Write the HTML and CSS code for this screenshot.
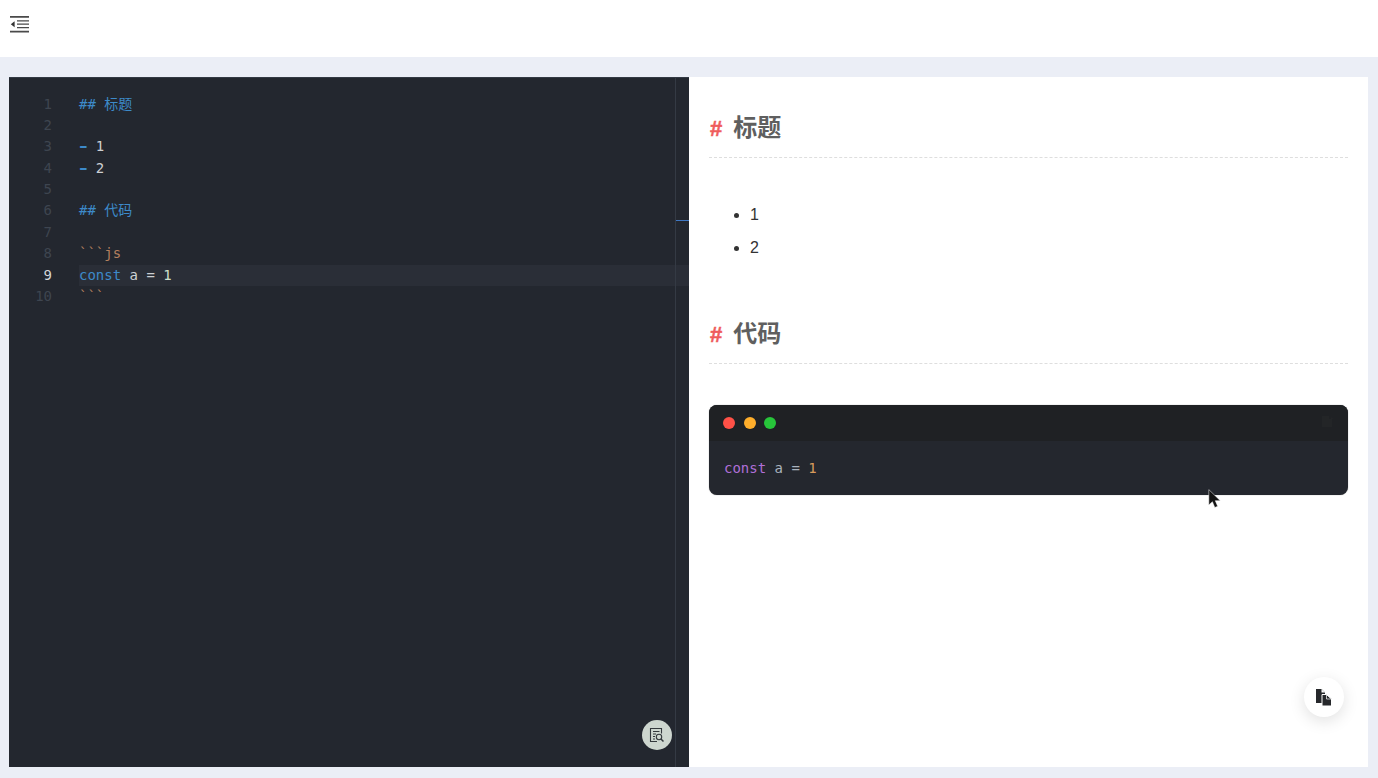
FILE: index.html
```html
<!DOCTYPE html>
<html lang="zh">
<head>
<meta charset="utf-8">
<title>Editor</title>
<link rel="stylesheet" href="styles.css">
</head>
<body>
<header class="topbar">
  <svg class="menu-icon" width="19" height="17" viewBox="0 0 19 17" fill="#4a4a4a"><path d="M0 0h19v1.800H0zM0 14.700h19v1.800H0z"/><path d="M7 4.200h12v1.200H7zM7 7.600h12v1.200H7zM7 11h12v1.200H7z"/><path d="M0.800 8.200L4.600 5.200v6z" fill="#333"/></svg>
</header>
<main class="workspace">
  <section class="editor">
    <div class="gutter">
      <div class="num">1</div><div class="num">2</div><div class="num">3</div><div class="num">4</div><div class="num">5</div><div class="num">6</div><div class="num">7</div><div class="num">8</div><div class="num active">9</div><div class="num">10</div>
    </div>
    <div class="lines">
      <div class="line"><span class="blue">## 标题</span></div>
      <div class="line"></div>
      <div class="line"><span class="blue dash">-</span> 1</div>
      <div class="line"><span class="blue dash">-</span> 2</div>
      <div class="line"></div>
      <div class="line"><span class="blue">## 代码</span></div>
      <div class="line"></div>
      <div class="line"><span class="tan">```js</span></div>
      <div class="line current"><span class="blue">const</span> a = <span class="num-val">1</span></div>
      <div class="line"><span class="tan">```</span></div>
    </div>
    <div class="rail"><span class="rail-mark"></span></div>
    <button class="search-btn" aria-label="search">
      <svg width="16" height="16" viewBox="0 0 16 16" fill="none" stroke="#33383c" stroke-width="1.100"><path d="M8 14.500H1.500v-13h11v5"/><path d="M4 4.500h6.500M4 7h3M4 9.500h2M4 12h2"/><circle cx="10" cy="10" r="2.700"/><path d="M12 12l2.500 2.500" stroke-width="1.500"/></svg>
    </button>
  </section>
  <section class="preview">
    <h2 class="heading"><span class="hash">#</span>标题</h2>
    <ul class="list"><li>1</li><li>2</li></ul>
    <h2 class="heading"><span class="hash">#</span>代码</h2>
    <div class="code-card">
      <div class="code-head">
        <i class="dot red"></i><i class="dot amber"></i><i class="dot green"></i>
        <svg class="head-copy" width="13" height="14" viewBox="0 0 13 14" fill="#232527"><path d="M0 0h7v3h3v8H0z"/><path d="M9 1l3 2h-3z"/></svg>
      </div>
      <pre class="code-body"><span class="kw">const</span> a = <span class="lit">1</span></pre>
    </div>
    <button class="copy-btn" aria-label="copy">
      <svg width="16" height="17" viewBox="0 0 16 17"><path d="M0 0h5.500L9 3.500V14H0z" fill="#26282b"/><path d="M5.500 0v3.500H9" fill="#fff"/><path d="M6 5.500h4.500L15.500 10v7H6z" fill="#26282b" stroke="#fff" stroke-width="1"/><path d="M10.500 6v4h4.500" fill="none" stroke="#fff" stroke-width=".7"/></svg>
    </button>
    <svg class="cursor" width="13" height="20" viewBox="0 0 13 20"><path d="M.8 .6v15.400l3.600-3.300 2.400 5.800 2.900-1.200-2.400-5.600h5z" fill="#141414" stroke="#fff" stroke-width=".5"/></svg>
  </section>
</main>
</body>
</html>
```
FILE: styles.css
```css
* { box-sizing: border-box; }
html, body { height: 100%; }
body {
  margin: 0;
  height: 778px;
  overflow: hidden;
  background: #ebeef6;
  font-family: "Liberation Sans", "Noto Sans CJK SC", sans-serif;
  display: flex;
  flex-direction: column;
}
.topbar {
  height: 57px;
  flex: none;
  background: #fff;
  display: flex;
  align-items: center;
  padding: 0 0 8px 10px;
}
.menu-icon { display: block; }
.workspace {
  margin: 20px 10px 11px 9px;
  flex: 1;
  display: flex;
  min-height: 0;
}
.editor {
  position: relative;
  width: 680px;
  flex: none;
  background: #23272f;
  border-top: 1px solid #333a44;
  display: flex;
  padding-top: 15.500px;
  font-family: "DejaVu Sans Mono", "Noto Sans CJK SC", monospace;
  font-size: 14px;
  line-height: 21.390px;
  color: #cdd0d3;
}
.gutter {
  width: 43px;
  flex: none;
  text-align: right;
  color: #3e4550;
}
.num.active { color: #d4d7da; }
.num { height: 21.390px; }
.lines {
  margin-left: 27px;
  flex: 1;
}
.line { height: 21.390px; white-space: pre; }
.line.current { background: #2a2e37; }
.blue { color: #3d8ac9; }
.dash {
  display: inline-block;
  transform: scaleX(1.500);
  font-weight: 700;
}
.tan { color: #b5805f; }
.num-val { color: #cfe0cb; }
.rail {
  position: absolute;
  top: 0;
  right: 0;
  bottom: 0;
  width: 14px;
  border-left: 1px solid #343a44;
}
.rail-mark {
  position: absolute;
  left: 0;
  right: 0;
  top: 142px;
  height: 1px;
  background: #3f78c4;
}
.search-btn {
  position: absolute;
  right: 17px;
  bottom: 17px;
  width: 30px;
  height: 30px;
  padding: 0;
  border: 0;
  border-radius: 50%;
  background: #cdd6cf;
  display: flex;
  align-items: center;
  justify-content: center;
}
.preview {
  position: relative;
  flex: 1;
  background: #fff;
  padding: 20px 20px 0;
  color: #333;
}
.heading {
  margin: 0 0 40px;
  height: 61px;
  padding: 11px 0 0;
  font-size: 24px;
  line-height: 40px;
  font-weight: 700;
  color: #5f5f5f;
  border-bottom: 1px dashed #dedede;
  font-family: "Liberation Sans", "Noto Sans CJK SC", sans-serif;
}
.hash {
  color: #ef5c5c;
  font-size: 22px;
  margin-left: 1px;
  margin-right: 11px;
  -webkit-text-stroke: .5px #ef5c5c;
}
.list {
  margin: 0 0 39px;
  padding: 0 0 0 41px;
  font-size: 16px;
  line-height: 33px;
  color: #333;
}
.code-card {
  margin-top: 41px;
  border-radius: 8px;
  overflow: hidden;
  background: #24272e;
  height: 90px;
  box-shadow: 0 0 1px rgba(0, 0, 0, .5);
}
.code-head {
  height: 36px;
  background: #1f2124;
  display: flex;
  align-items: center;
  gap: 8.500px;
  padding: 0 13px 0 14px;
}
.head-copy { margin-left: auto; }
.dot {
  width: 12px;
  height: 12px;
  border-radius: 50%;
  display: block;
}
.red { background: #ff5147; }
.amber { background: #ffae2b; }
.green { background: #27c53a; }
.code-body {
  margin: 0;
  padding: 17px 15px;
  font-family: "DejaVu Sans Mono", monospace;
  font-size: 14px;
  line-height: 21px;
  color: #a9b2bd;
}
.kw { color: #b06fd8; }
.lit { color: #d99a5c; }
.copy-btn {
  position: absolute;
  right: 24px;
  bottom: 50px;
  width: 40px;
  height: 40px;
  padding: 0;
  border: 0;
  border-radius: 50%;
  background: #fff;
  box-shadow: 0 4px 16px rgba(0, 0, 0, .12);
  display: flex;
  align-items: center;
  justify-content: center;
}
.cursor {
  position: absolute;
  left: 519px;
  top: 412px;
}
```
